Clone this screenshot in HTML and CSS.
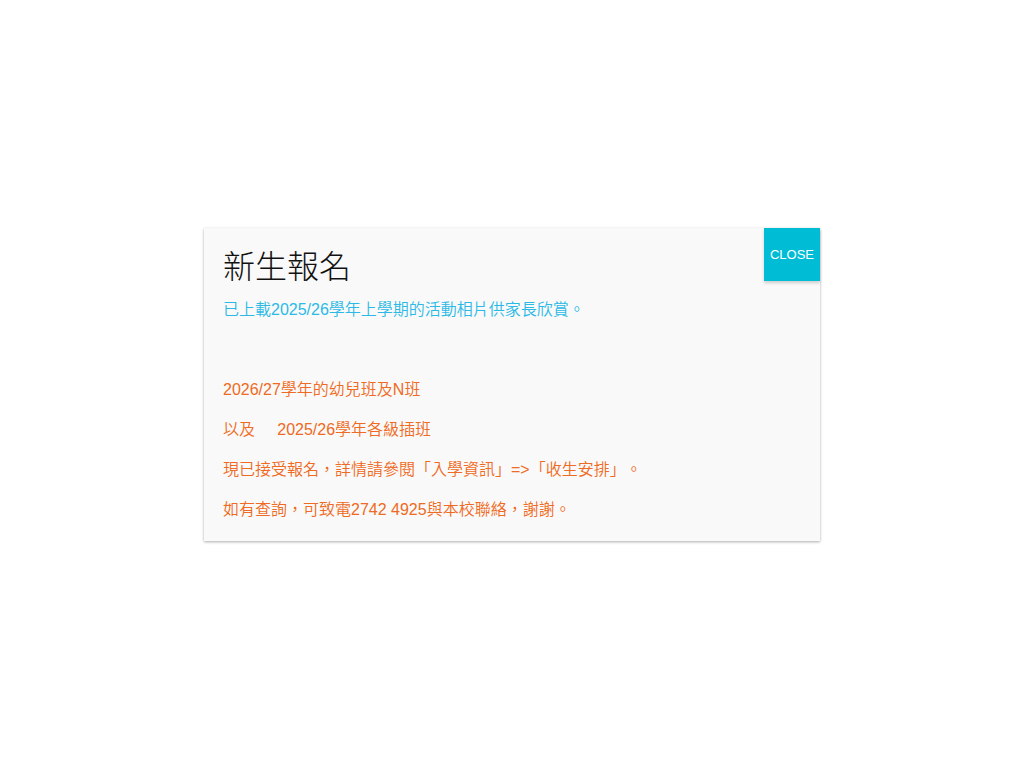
FILE: index.html
```html
<!DOCTYPE html>
<html lang="zh-Hant">
<head>
<meta charset="utf-8">
<title>新生報名</title>
<link rel="stylesheet" href="styles.css">
</head>
<body>
<div class="overlay">
  <div class="modal">
    <button class="close-btn" type="button">CLOSE</button>
    <h4 class="modal-title">新生報名</h4>
    <p class="note-blue">已上載2025/26學年上學期的活動相片供家長欣賞。</p>
    <p>&nbsp;</p>
    <p class="note-orange">2026/27學年的幼兒班及N班</p>
    <p class="note-orange">以及&nbsp;&nbsp;&nbsp;&nbsp;&nbsp;2025/26學年各級插班</p>
    <p class="note-orange">現已接受報名，詳情請參閱「入學資訊」=>「收生安排」。</p>
    <p class="note-orange last">如有查詢，可致電2742 4925與本校聯絡，謝謝。</p>
  </div>
</div>
</body>
</html>
```

FILE: styles.css
```css
html, body {
  margin: 0;
  padding: 0;
  background: #ffffff;
}

body {
  font-family: "Liberation Sans", "Noto Sans CJK TC", sans-serif;
  font-size: 16px;
  line-height: 24px;
  font-weight: 350;
  text-spacing-trim: space-all;
}

.overlay {
  height: 100vh;
  display: flex;
  align-items: center;
  justify-content: center;
}

.modal {
  position: relative;
  box-sizing: border-box;
  width: 616px;
  padding: 16px 20px 19px 19px;
  background: #f9f9f9;
  box-shadow: 0 1px 3px rgba(0, 0, 0, 0.22), 0 1px 2px rgba(0, 0, 0, 0.12);
}

.close-btn {
  position: absolute;
  top: 0;
  right: 0;
  width: 56px;
  height: 53px;
  border: 0;
  padding: 0;
  background: #00bcd4;
  color: #ffffff;
  font-family: "Liberation Sans", sans-serif;
  font-weight: 400;
  font-size: 13px;
  box-shadow: 0 2px 3px rgba(0, 0, 0, 0.18);
  cursor: pointer;
}

.modal-title {
  margin: 0 0 14px;
  font-family: "Noto Sans CJK TC", sans-serif;
  font-weight: 300;
  font-size: 32px;
  line-height: 40px;
  color: #111111;
}

.modal p {
  margin: 0 0 16px;
}

.modal p.last {
  margin-bottom: 0;
}

.note-blue {
  color: #2cb9e6;
}

.note-orange {
  color: #ef6a22;
}
```
